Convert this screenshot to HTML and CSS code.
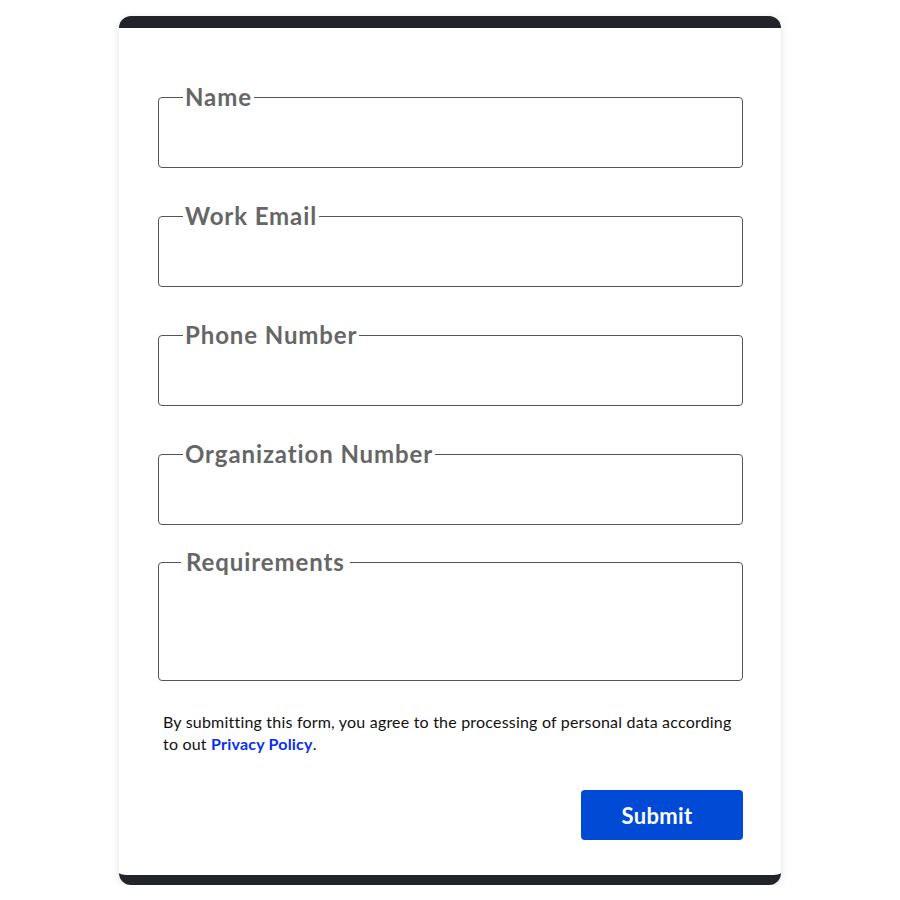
FILE: index.html
```html
<!DOCTYPE html>
<html lang="en">
<head>
    <meta charset="UTF-8">
    <meta name="viewport" content="width=device-width, initial-scale=1.0">
    <title>Contact Form</title>
    <link rel="stylesheet" href="styles.css">
</head>
<body>
    <div class="card">
        <form class="contact-form">
            <fieldset class="field">
                <legend>Name</legend>
                <input type="text" name="name">
            </fieldset>
            <fieldset class="field">
                <legend>Work Email</legend>
                <input type="email" name="email">
            </fieldset>
            <fieldset class="field">
                <legend>Phone Number</legend>
                <input type="tel" name="phone">
            </fieldset>
            <fieldset class="field">
                <legend>Organization Number</legend>
                <input type="text" name="org">
            </fieldset>
            <fieldset class="field field-area">
                <legend>Requirements</legend>
                <textarea name="requirements"></textarea>
            </fieldset>
            <p class="consent">By submitting this form, you agree to the processing of personal data according to out <a href="#">Privacy Policy</a>.</p>
            <div class="actions">
                <button type="submit">Submit</button>
            </div>
        </form>
    </div>
</body>
</html>
```

FILE: styles.css
```css
body {
    margin: 0;
    font-family: Lato, "Open Sans", sans-serif;
    background-color: #fff;
}

.card {
    width: 662px;
    margin: 16px auto 0;
    box-sizing: border-box;
    background-color: #fff;
    border-top: 12px solid #212429;
    border-bottom: 10px solid #212429;
    border-radius: 12px;
    box-shadow: 0 2px 8px rgba(0, 0, 0, 0.12);
    padding: 55px 38px 35px 39px;
}

.field {
    margin: 0 0 34px;
    padding: 0;
    border: 1px solid #50555b;
    border-radius: 4px;
}

.field legend {
    margin-left: 24px;
    padding: 0 2px;
    font-size: 24px;
    line-height: 28px;
    font-weight: bold;
    letter-spacing: 0.9px;
    color: #666;
}

.field input,
.field textarea {
    display: block;
    width: 100%;
    height: 56px;
    box-sizing: border-box;
    border: none;
    background: transparent;
    outline: none;
    padding: 0 16px;
    font-family: inherit;
    font-size: 16px;
}

.field-area {
    margin-top: -11px;
    margin-bottom: 0;
}

.field-area legend {
    margin-left: 22px;
    padding: 0 5px;
}

.field textarea {
    height: 104px;
    resize: none;
    padding-top: 8px;
}

.consent {
    margin: 30px 0 0 5px;
    font-size: 16px;
    line-height: 22px;
    letter-spacing: 0.2px;
    color: #111;
}

.consent a {
    color: #0a2ff0;
    font-weight: bold;
    text-decoration: none;
}

.actions {
    display: flex;
    justify-content: flex-end;
    margin-top: 35px;
}

button {
    width: 162px;
    height: 50px;
    padding: 0 10px 0 0;
    background-color: #004ad6;
    color: #fff;
    border: none;
    border-radius: 4px;
    font-family: inherit;
    font-size: 22px;
    font-weight: bold;
    letter-spacing: 0.3px;
    cursor: pointer;
}
```
